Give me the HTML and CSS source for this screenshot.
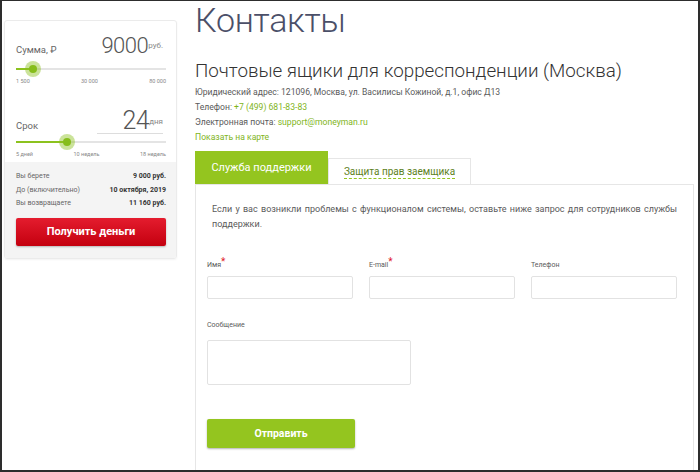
FILE: index.html
```html
<!DOCTYPE html>
<html lang="ru">
<head>
	<meta charset="UTF-8">
	<title>Контакты</title>
	<link rel="stylesheet" href="styles.css">
</head>
<body>
	<div class="frame">
		<div class="calc">
			<div class="calcTop">
				<div class="calcHead">
					<span class="calcLabel">Сумма, ₽</span>
					<span class="calcValue calcValue1"><span class="num">9000</span><span class="unit">руб.</span></span>
				</div>
				<div class="slider">
					<span class="fill" style="width: 11.3%"></span>
					<span class="thumb" style="left: 11.3%"></span>
				</div>
				<div class="ticks"><span>1 500</span><span>30 000</span><span>80 000</span></div>

				<div class="calcHead calcHead2">
					<span class="calcLabel">Срок</span>
					<span class="calcValue calcValue2"><span class="num">24</span><span class="unit">дня</span></span>
				</div>
				<div class="slider slider2">
					<span class="fill" style="width: 34%"></span>
					<span class="thumb" style="left: 34%"></span>
				</div>
				<div class="ticks"><span>5 дней</span><span>10 недель</span><span>18 недель</span></div>
			</div>
			<div class="calcBottom">
				<div class="sumRow"><span>Вы берете</span><b>9 000 руб.</b></div>
				<div class="sumRow"><span>До (включительно)</span><b>10 октября, 2019</b></div>
				<div class="sumRow"><span>Вы возвращаете</span><b>11 160 руб.</b></div>
				<a href="javascript:;" class="redBtn">Получить деньги</a>
			</div>
		</div>

		<div class="main">
			<h1>Контакты</h1>
			<h2>Почтовые ящики для корреспонденции (Москва)</h2>
			<ul class="info">
				<li>Юридический адрес: 121096, Москва, ул. Василисы Кожиной, д.1, офис Д13</li>
				<li>Телефон: <a href="javascript:;">+7 (499) 681-83-83</a></li>
				<li>Электронная почта: <a href="javascript:;">support@moneyman.ru</a></li>
				<li><a href="javascript:;">Показать на карте</a></li>
			</ul>

			<div class="tabs">
				<a href="javascript:;" class="tab active">Служба поддержки</a>
				<a href="javascript:;" class="tab"><span>Защита прав заемщика</span></a>
			</div>
			<div class="panel">
				<p class="intro">Если у вас возникли проблемы с функционалом системы, оставьте ниже запрос для сотрудников службы поддержки.</p>
				<div class="fields">
					<label class="field">Имя<sup>*</sup><input type="text"></label>
					<label class="field">E-mail<sup>*</sup><input type="text"></label>
					<label class="field">Телефон<input type="text"></label>
				</div>
				<label class="field msg">Сообщение<textarea></textarea></label>
				<a href="javascript:;" class="sendBtn">Отправить</a>
			</div>
		</div>
	</div>
</body>
</html>
```

FILE: styles.css
```css
*{
	margin: 0;
	padding: 0;
	box-sizing: border-box;
}
body{
	font-family: Roboto, "Liberation Sans", sans-serif;
	color: #5a5a5a;
	background: #fff;
}
a{
	text-decoration: none;
}
.frame{
	width: 700px;
	height: 472px;
	overflow: hidden;
	border-style: solid;
	border-color: #2d2d2d;
	border-width: 1px 2px 2px 2px;
	display: flex;
	align-items: flex-start;
}

/* calculator */
.calc{
	width: 173px;
	margin: 19px 0 0 2px;
	border: 1px solid #ebebeb;
	border-radius: 3px;
	box-shadow: 0 1px 2px rgba(0,0,0,.05);
	overflow: hidden;
}
.calcTop{
	padding: 16px 10px 4px 11px;
}
.calcHead{
	display: flex;
	justify-content: space-between;
	align-items: baseline;
	height: 18px;
}
.calcHead2{
	margin-top: 27px;
}
.calcLabel{
	font-size: 9.5px;
	line-height: 12px;
	color: #666;
}
.calcValue{
	width: 66px;
	margin-right: 3px;
	text-align: right;
	white-space: nowrap;
	color: #555;
}
.calcValue .num{
	font-weight: 300;
	letter-spacing: -0.5px;
}
.calcValue .unit{
	font-size: 8px;
	color: #888;
	vertical-align: 5px;
}
.calcValue1 .num{
	font-size: 22px;
	line-height: 18px;
}
.calcValue2{
	border-bottom: 1px solid #ddd;
	margin-left: 30px;
}
.calcValue2 .num{
	font-size: 25px;
	line-height: 17px;
}
.slider{
	position: relative;
	height: 16px;
	margin-top: 6px;
}
.slider2{
	margin-top: 4px;
}
.slider:before{
	content: "";
	position: absolute;
	left: 0;
	right: 0;
	top: 7px;
	height: 2px;
	background: #e4e4e4;
}
.slider .fill{
	position: absolute;
	left: 0;
	top: 7px;
	height: 2px;
	background: #8cc21e;
}
.slider .thumb{
	position: absolute;
	top: 0;
	width: 16px;
	height: 16px;
	margin-left: -8px;
	border-radius: 50%;
	background: rgba(140,194,30,.45);
}
.slider .thumb:after{
	content: "";
	position: absolute;
	left: 4px;
	top: 4px;
	width: 8px;
	height: 8px;
	border-radius: 50%;
	background: #86bd1a;
}
.ticks{
	display: flex;
	justify-content: space-between;
	font-size: 5.5px;
	line-height: 8px;
	color: #888;
}
.calcBottom{
	background: #f4f4f4;
	padding: 8px 10px 12px 11px;
}
.sumRow{
	display: flex;
	justify-content: space-between;
	font-size: 7px;
	line-height: 13.5px;
	color: #666;
}
.sumRow b{
	color: #333;
}
.redBtn{
	display: block;
	margin-top: 7px;
	height: 28px;
	line-height: 28px;
	border-radius: 2px;
	background: linear-gradient(#e41c2e, #c4000f);
	box-shadow: 0 1px 2px rgba(0,0,0,.25);
	color: #fff;
	font-size: 11px;
	font-weight: bold;
	text-align: center;
}

/* main */
.main{
	width: 499px;
	margin-left: 18px;
}
h1{
	font-size: 34px;
	line-height: 35px;
	font-weight: 300;
	letter-spacing: -0.3px;
	color: #4b4f68;
	margin-top: 1.5px;
}
h2{
	font-size: 18.8px;
	line-height: 22px;
	font-weight: 300;
	color: #333;
	margin-top: 22.5px;
}
.info{
	list-style: none;
	margin-top: 2.5px;
	font-size: 8.6px;
	line-height: 15px;
	color: #5a5a5a;
}
.info a{
	color: #7fb51b;
}
.tabs{
	display: flex;
	align-items: flex-end;
	margin-top: 6.5px;
}
.tab{
	display: flex;
	align-items: center;
	justify-content: center;
	font-size: 11px;
}
.tab.active{
	width: 133px;
	height: 33px;
	background: #94c51f;
	color: #fff;
}
.tab:not(.active){
	width: 143px;
	height: 26px;
	border: 1px solid #e6e6e6;
	border-bottom: none;
	color: #5d7f22;
	font-size: 10px;
}
.tab span{
	border-bottom: 1px dashed #94c51f;
	line-height: 12px;
	padding-top: 1px;
}
.panel{
	border: 1px solid #e6e6e6;
	border-bottom: none;
	height: 300px;
	padding: 17px 16px 0 11px;
}
.intro{
	padding-left: 5px;
	font-size: 9px;
	line-height: 15px;
	text-align: justify;
	color: #5a5a5a;
}
.fields{
	display: grid;
	grid-template-columns: repeat(3, 1fr);
	column-gap: 16px;
	align-items: end;
	margin-top: 28px;
}
.field{
	display: block;
	font-size: 7px;
	line-height: 10px;
	color: #5a5a5a;
}
.field sup{
	color: #e0182a;
	font-size: 10px;
	line-height: 0;
	vertical-align: 2px;
}
.field input{
	display: block;
	width: 100%;
	height: 23px;
	margin-top: 6px;
	border: 1px solid #e2e2e2;
	border-radius: 2px;
	outline: none;
}
.msg{
	margin-top: 21px;
}
.msg textarea{
	display: block;
	width: 204px;
	height: 45px;
	margin-top: 10px;
	border: 1px solid #e2e2e2;
	border-radius: 2px;
	resize: none;
	outline: none;
}
.sendBtn{
	display: block;
	width: 148px;
	height: 29px;
	line-height: 29px;
	margin-top: 34px;
	border-radius: 2px;
	background: #94c51f;
	box-shadow: 0 1px 2px rgba(0,0,0,.3);
	color: #fff;
	font-size: 10.5px;
	font-weight: bold;
	text-align: center;
}
```
